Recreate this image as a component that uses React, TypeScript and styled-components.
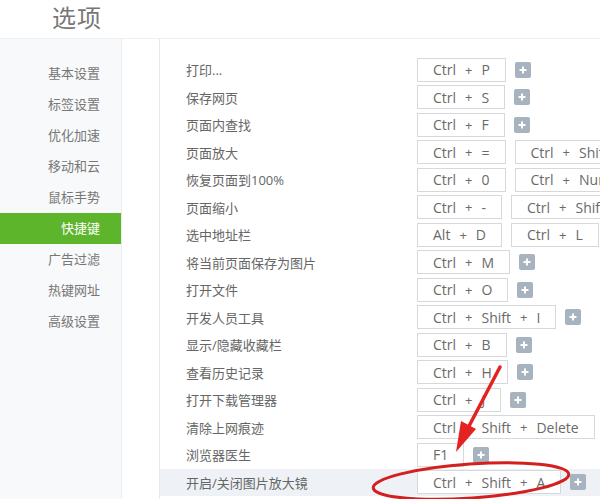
import React from 'react';
import styled, { createGlobalStyle } from 'styled-components';

const GlobalStyle = createGlobalStyle`
  html, body {
    margin: 0;
    padding: 0;
    background: #fff;
  }
  body {
    font-family: "Open Sans", "Noto Sans CJK SC", sans-serif;
  }
`;

const menu = [
  '基本设置',
  '标签设置',
  '优化加速',
  '移动和云',
  '鼠标手势',
  '快捷键',
  '广告过滤',
  '热键网址',
  '高级设置',
];

interface Shortcut {
  label: string;
  keys: string[][];
  highlight?: boolean;
}

const shortcuts: Shortcut[] = [
  { label: '打印...', keys: [['Ctrl', 'P']] },
  { label: '保存网页', keys: [['Ctrl', 'S']] },
  { label: '页面内查找', keys: [['Ctrl', 'F']] },
  { label: '页面放大', keys: [['Ctrl', '='], ['Ctrl', 'Shift', '=']] },
  { label: '恢复页面到100%', keys: [['Ctrl', '0'], ['Ctrl', 'Num 0']] },
  { label: '页面缩小', keys: [['Ctrl', '-'], ['Ctrl', 'Shift', '-']] },
  { label: '选中地址栏', keys: [['Alt', 'D'], ['Ctrl', 'L']] },
  { label: '将当前页面保存为图片', keys: [['Ctrl', 'M']] },
  { label: '打开文件', keys: [['Ctrl', 'O']] },
  { label: '开发人员工具', keys: [['Ctrl', 'Shift', 'I']] },
  { label: '显示/隐藏收藏栏', keys: [['Ctrl', 'B']] },
  { label: '查看历史记录', keys: [['Ctrl', 'H']] },
  { label: '打开下载管理器', keys: [['Ctrl', 'J']] },
  { label: '清除上网痕迹', keys: [['Ctrl', 'Shift', 'Delete']] },
  { label: '浏览器医生', keys: [['F1']] },
  { label: '开启/关闭图片放大镜', keys: [['Ctrl', 'Shift', 'A']], highlight: true },
];

const App: React.FC = () => {
  return (
    <Page>
      <GlobalStyle />
      <Header>
        <Title>选项</Title>
      </Header>
      <Body>
        <Sidebar>
          {menu.map((item) => (
            <MenuItem key={item} $active={item === '快捷键'}>
              {item}
            </MenuItem>
          ))}
        </Sidebar>
        <Main>
          {shortcuts.map((s) => (
            <Row key={s.label} $highlight={s.highlight}>
              <Label>{s.label}</Label>
              <Keys>
                {s.keys.map((combo, i) => (
                  <KeyBox key={i}>
                    {combo.map((k, j) => (
                      <React.Fragment key={j}>
                        {j > 0 && <Sep>+</Sep>}
                        <span>{k}</span>
                      </React.Fragment>
                    ))}
                  </KeyBox>
                ))}
                <AddButton>
                  <svg width="8" height="8" viewBox="0 0 8 8">
                    <path d="M4 0.5v7M0.5 4h7" stroke="#fff" strokeWidth="2" />
                  </svg>
                </AddButton>
              </Keys>
            </Row>
          ))}
        </Main>
      </Body>
      {/* red hand-drawn annotation over the screenshot */}
      <Annotation width="600" height="499" viewBox="0 0 600 499">
        <ellipse
          cx="471"
          cy="481"
          rx="98"
          ry="17"
          transform="rotate(-4 471 481)"
          fill="none"
          stroke="#d41f1f"
          strokeWidth="3"
        />
        <path d="M500 367 L468 428" stroke="#e42222" strokeWidth="3.5" strokeLinecap="round" />
        <polygon points="456,452 461,421 476,429" fill="#e42222" />
      </Annotation>
    </Page>
  );
};

const Page = styled.div`
  position: relative;
  width: 600px;
  height: 499px;
  overflow: hidden;
  display: flex;
  flex-direction: column;
  background: #fff;
`;

const Header = styled.div`
  height: 38px;
  flex-shrink: 0;
  display: flex;
  align-items: center;
  padding-left: 52px;
  border-bottom: 1px solid #eef0f2;
`;

const Title = styled.h1`
  margin: 0;
  font-size: 24px;
  font-weight: 400;
  color: #777;
  line-height: 1;
  margin-top: -3px;
  letter-spacing: 1px;
`;

const Body = styled.div`
  flex: 1;
  display: flex;
  min-height: 0;
`;

const Sidebar = styled.div`
  width: 121px;
  flex-shrink: 0;
  background: #f8f9fa;
  border-right: 1px solid #e9ebed;
  padding-top: 19px;
`;

const MenuItem = styled.div<{ $active?: boolean }>`
  height: 31px;
  line-height: 31px;
  text-align: right;
  padding-right: 21px;
  font-size: 13px;
  color: ${(p) => (p.$active ? '#fff' : '#777')};
  background: ${(p) => (p.$active ? '#5db52b' : 'transparent')};
`;

const Main = styled.div`
  flex: 1;
  margin-left: 37px;
  border-left: 1px solid #e6e8ea;
  padding-top: 17px;
  overflow: hidden;
`;

const Row = styled.div<{ $highlight?: boolean }>`
  height: 27.5px;
  display: flex;
  align-items: center;
  padding-left: 26px;
  white-space: nowrap;
  background: ${(p) => (p.$highlight ? '#eef2f7' : 'transparent')};
`;

const Label = styled.div`
  width: 231px;
  flex-shrink: 0;
  font-size: 13px;
  color: #666;
`;

const Keys = styled.div`
  display: flex;
  align-items: center;
  gap: 9px;
`;

const KeyBox = styled.div`
  height: 22px;
  display: inline-flex;
  align-items: center;
  gap: 9px;
  padding: 0 15px;
  border: 1px solid #d6d8da;
  background: #fff;
  font-size: 14px;
  color: #6a6a6a;
  flex-shrink: 0;
`;

const Sep = styled.span`
  font-size: 13px;
`;

const AddButton = styled.div`
  width: 16px;
  height: 16px;
  border-radius: 2px;
  background: #a7b3bf;
  display: flex;
  align-items: center;
  justify-content: center;
  flex-shrink: 0;
`;

const Annotation = styled.svg`
  position: absolute;
  left: 0;
  top: 0;
  pointer-events: none;
`;

export default App;
